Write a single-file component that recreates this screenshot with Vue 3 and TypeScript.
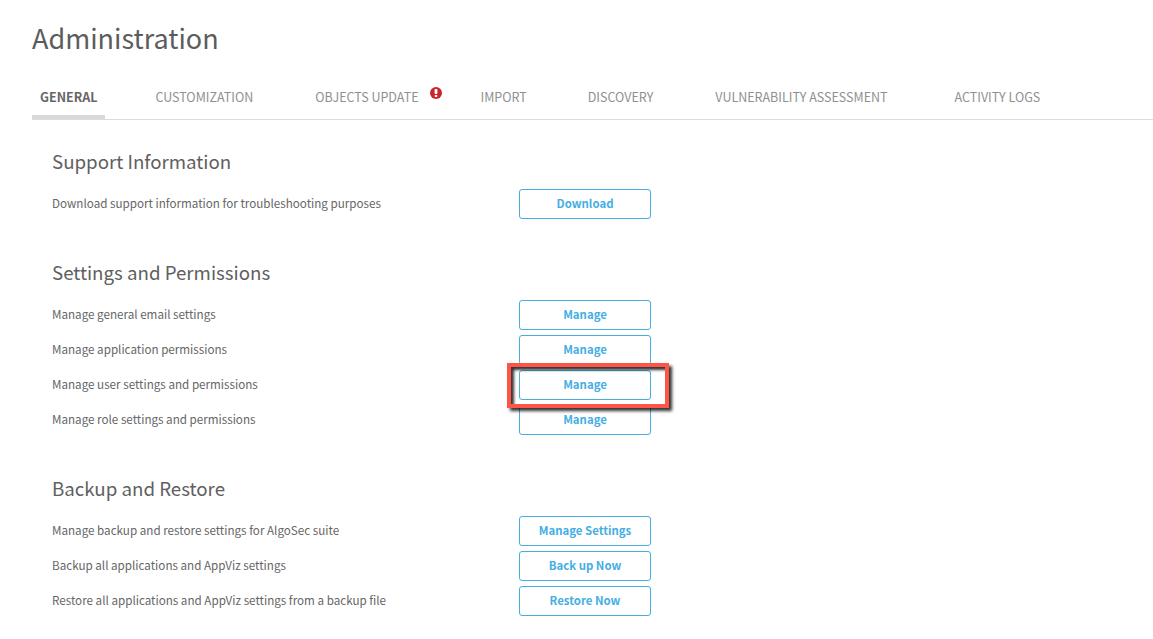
<template>
  <div class="page">
    <h1 class="title">Administration</h1>

    <nav class="tabs">
      <a v-for="tab in tabs" :key="tab.label" class="tab" :class="{ active: tab.active }">
        {{ tab.label }}
        <svg v-if="tab.alert" class="alert" viewBox="0 0 12 12" width="12" height="12">
          <circle cx="6" cy="6" r="6" fill="#c9252b" />
          <rect x="4.6" y="2" width="2.8" height="5" rx="0.7" fill="#fff" />
          <rect x="4.8" y="8" width="2.4" height="2.1" rx="0.6" fill="#fff" />
        </svg>
      </a>
    </nav>

    <section v-for="section in sections" :key="section.title" class="section">
      <h2 class="heading">{{ section.title }}</h2>
      <div v-for="row in section.rows" :key="row.text" class="row">
        <span class="label">{{ row.text }}</span>
        <div class="action">
          <button class="btn" type="button">{{ row.action }}</button>
          <div v-if="row.marked" class="marker"></div>
        </div>
      </div>
    </section>
  </div>
</template>

<script setup lang="ts">
interface Tab {
  label: string
  active?: boolean
  alert?: boolean
}

interface Row {
  text: string
  action: string
  marked?: boolean
}

const tabs: Tab[] = [
  { label: 'GENERAL', active: true },
  { label: 'CUSTOMIZATION' },
  { label: 'OBJECTS UPDATE', alert: true },
  { label: 'IMPORT' },
  { label: 'DISCOVERY' },
  { label: 'VULNERABILITY ASSESSMENT' },
  { label: 'ACTIVITY LOGS' }
]

const sections: { title: string; rows: Row[] }[] = [
  {
    title: 'Support Information',
    rows: [{ text: 'Download support information for troubleshooting purposes', action: 'Download' }]
  },
  {
    title: 'Settings and Permissions',
    rows: [
      { text: 'Manage general email settings', action: 'Manage' },
      { text: 'Manage application permissions', action: 'Manage' },
      { text: 'Manage user settings and permissions', action: 'Manage', marked: true },
      { text: 'Manage role settings and permissions', action: 'Manage' }
    ]
  },
  {
    title: 'Backup and Restore',
    rows: [
      { text: 'Manage backup and restore settings for AlgoSec suite', action: 'Manage Settings' },
      { text: 'Backup all applications and AppViz settings', action: 'Back up Now' },
      { text: 'Restore all applications and AppViz settings from a backup file', action: 'Restore Now' }
    ]
  }
]
</script>

<style scoped>
.page {
  height: 639px;
  overflow: hidden;
  background: #fff;
  padding: 0 0 0 32px;
  box-sizing: border-box;
  font-family: "Noto Sans CJK SC", "Noto Sans", sans-serif;
  color: #555;
}

.title {
  margin: 0;
  padding-top: 18px;
  height: 40px;
  font-size: 27px;
  font-weight: 400;
  line-height: 40px;
  color: #5c5c5c;
}

.tabs {
  display: flex;
  margin-top: 18px;
  height: 43px;
  gap: 46px;
  border-bottom: 1px solid #dcdcdc;
}

.tab {
  position: relative;
  padding: 0 8px;
  font-size: 12.5px;
  line-height: 41px;
  color: #909090;
  white-space: nowrap;
}

.tab:first-child {
  margin-right: -4px;
}

.tab:nth-child(4) {
  margin-right: -1px;
}

.tab:nth-child(6) {
  margin-right: 5px;
}

.tab.active {
  font-weight: 700;
  font-size: 12.5px;
  color: #666;
  border-bottom: 4px solid #d9d9d9;
  height: 39px;
}

.alert {
  position: absolute;
  left: 123px;
  top: 11px;
}

.section {
  padding-left: 20px;
  margin-bottom: 39px;
}

.section:first-of-type {
  margin-top: 27px;
}

.heading {
  margin: 0 0 12px;
  font-size: 18.7px;
  font-weight: 400;
  line-height: 27px;
  height: 30px;
  color: #606060;
}

.row {
  display: flex;
  align-items: center;
  height: 30px;
  margin-bottom: 5px;
}

.row:last-child {
  margin-bottom: 0;
}

.label {
  width: 467px;
  font-size: 11.65px;
  line-height: 27px;
  height: 30px;
  color: #666;
}

.action {
  position: relative;
  width: 132px;
  height: 30px;
}

.btn {
  width: 132px;
  height: 30px;
  padding: 0 0 2px;
  display: block;
  background: #fff;
  border: 1px solid #45aee3;
  border-radius: 3px;
  font-family: inherit;
  font-size: 11.4px;
  font-weight: 700;
  line-height: 24px;
  color: #45aee3;
}

.marker {
  position: absolute;
  z-index: 2;
  left: -12px;
  top: -7px;
  width: 162px;
  height: 45px;
  box-sizing: border-box;
  border: 4px solid #ff5548;
  box-shadow: 3px 3px 3px rgba(0, 0, 0, 0.8), inset 3px 3px 3px rgba(0, 0, 0, 0.8);
  pointer-events: none;
}
</style>
